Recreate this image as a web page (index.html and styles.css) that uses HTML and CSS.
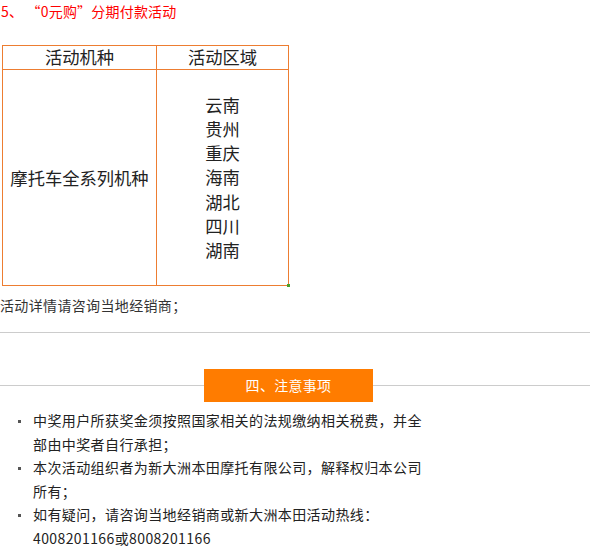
FILE: index.html
```html
<!DOCTYPE html>
<html lang="zh-CN">
<head>
<meta charset="utf-8">
<link rel="stylesheet" href="styles.css">
</head>
<body>
<div class="page">
  <p class="title">5、 “0元购”分期付款活动</p>
  <div class="table-wrap">
    <table class="promo">
      <tr class="head-row">
        <th class="col1">活动机种</th>
        <th class="col2">活动区域</th>
      </tr>
      <tr class="body-row">
        <td class="model">摩托车全系列机种</td>
        <td class="regions">云南<br>贵州<br>重庆<br>海南<br>湖北<br>四川<br>湖南</td>
      </tr>
    </table>
  </div>
  <p class="note">活动详情请咨询当地经销商；</p>
  <hr class="rule">
  <div class="section-head">
    <span class="section-box">四、注意事项</span>
  </div>
  <ul class="notice">
    <li>中奖用户所获奖金须按照国家相关的法规缴纳相关税费，并全部由中奖者自行承担；</li>
    <li>本次活动组织者为新大洲本田摩托有限公司，解释权归本公司所有；</li>
    <li>如有疑问，请咨询当地经销商或新大洲本田活动热线：4008201166或8008201166</li>
  </ul>
</div>
</body>
</html>
```
FILE: styles.css
```css
html, body {
  margin: 0;
  padding: 0;
  background: #fff;
}
body {
  font-family: "Noto Sans CJK SC", "Microsoft YaHei", sans-serif;
  color: #333;
}
.page {
  width: 590px;
}
.title {
  margin: 0;
  padding-left: 1px;
  height: 22px;
  line-height: 22px;
  font-size: 14px;
  color: #f00;
  letter-spacing: 0.2px;
}
.table-wrap {
  margin-top: 23px;
  margin-left: 2px;
  position: relative;
  width: 286px;
}
.table-wrap::after {
  content: "";
  position: absolute;
  right: -2px;
  bottom: -1px;
  width: 3px;
  height: 3px;
  background: #4aa02c;
}
.promo {
  border-collapse: collapse;
  width: 286px;
  table-layout: fixed;
}
.promo th, .promo td {
  border: 1px solid #ed7d31;
  padding: 0;
  text-align: center;
  font-weight: normal;
  font-size: 17.3px;
  color: #222;
}
.head-row { height: 24px; }
.body-row { height: 216px; }
.promo th {
  line-height: 21px;
  padding-bottom: 2px;
}
.col1 { width: 153px; }
.col2 { width: 131px; }
.promo td {
  vertical-align: middle;
}
.regions {
  line-height: 24.1px;
  padding-bottom: 2px;
}
.model {
  line-height: 24px;
  padding-bottom: 4px;
}
.note {
  margin: 8px 0 0 0;
  height: 22px;
  line-height: 22px;
  font-size: 14px;
  letter-spacing: 0.35px;
  color: #333;
}
.rule {
  margin: 16px 0 0 0;
  border: 0;
  height: 1px;
  background: #ccc;
}
.section-head {
  margin-top: 36px;
  display: flex;
  align-items: center;
  background: linear-gradient(#ccc, #ccc) 0 16px / 100% 1px no-repeat;
}
.section-box {
  margin-left: 204px;
  width: 169px;
  height: 33px;
  line-height: 33px;
  background: #ff7c00;
  color: #fff;
  font-size: 14px;
  text-align: center;
  letter-spacing: 0.3px;
}
.notice {
  list-style: none;
  margin: 7px 0 0 0;
  padding: 0 0 0 33px;
  width: 397px;
}
.notice li {
  position: relative;
  font-size: 14px;
  line-height: 23.6px;
  letter-spacing: 0.4px;
  color: #222;
}
.notice li::before {
  content: "";
  position: absolute;
  left: -15px;
  top: 11px;
  width: 3px;
  height: 3px;
  background: #555;
}
```
